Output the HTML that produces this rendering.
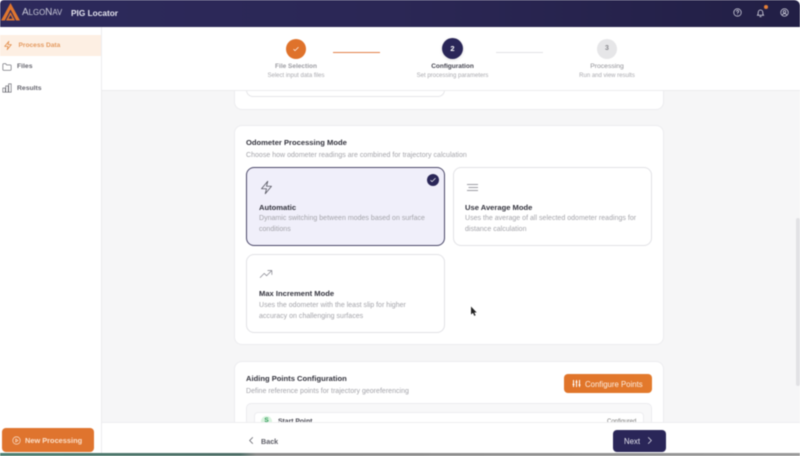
<!DOCTYPE html>
<html lang="en"><head><meta charset="utf-8"><title>PIG Locator</title>
<style>
*{box-sizing:border-box;margin:0;padding:0}
html,body{width:800px;height:456px;overflow:hidden;background:#fff;font-family:"Liberation Sans",sans-serif}
#p{position:relative;width:800px;height:456px;overflow:hidden;filter:blur(.4px)}
.a{position:absolute;white-space:nowrap}
.card{position:absolute;background:#fff;border:1px solid #ececef;border-radius:8px}
.opt{position:absolute;background:#fff;border:1px solid #e2e2e6;border-radius:8px}
.t{font-size:7.6px;font-weight:700;color:#33333d}
.d{font-size:7px;color:#a3a3a9;letter-spacing:.02px;line-height:11px;white-space:normal}
.c{text-align:center;transform:translateX(-50%)}
svg{position:absolute;fill:none}
</style></head><body><div id="p">
<div class="a" style="left:102px;top:91px;width:698px;height:365px;background:#f6f6f7"></div>

<div class="card" style="left:234px;top:80px;width:430px;height:30px;border-radius:0 0 8px 8px"></div>
<div class="a" style="left:246px;top:80px;width:199px;height:17px;background:#fff;border:1px solid #e6e6e9;border-top:0;border-radius:0 0 7px 7px"></div>

<div class="card" style="left:234px;top:125px;width:430px;height:220px"></div>
<div class="a t" style="left:246px;top:137.500px">Odometer Processing Mode</div>
<div class="a d" style="left:246px;top:149.500px;white-space:nowrap">Choose how odometer readings are combined for trajectory calculation</div>

<div class="opt" style="left:246px;top:167px;width:199px;height:79px;background:#f0effa;border:1.200px solid #4a4768"></div>
<svg style="left:259px;top:180px" width="15" height="15" viewBox="0 0 24 24" stroke="#55555f" stroke-width="1.300" stroke-linejoin="round" stroke-linecap="round"><path d="M4 14 14 2l-2 8h8L10 22l2-8z"/></svg>
<div class="a t" style="left:259px;top:202.500px">Automatic</div>
<div class="a d" style="left:259px;top:213px;width:180px">Dynamic switching between modes based on surface conditions</div>
<div class="a" style="left:427px;top:174px;width:12px;height:12px;border-radius:50%;background:#2a2658"></div>
<svg style="left:429px;top:176px" width="8" height="8" viewBox="0 0 24 24" stroke="#fff" stroke-width="2" stroke-linecap="round" stroke-linejoin="round"><path d="M5 13l4 4L19 7"/></svg>

<div class="opt" style="left:453px;top:167px;width:199px;height:79px"></div>
<svg style="left:466px;top:181px" width="13" height="13" viewBox="0 0 13 13" stroke="#7d7d86" stroke-width=".8"><path d="M1 3.500h11M2.500 6.500h9.500M1 9.500h11"/></svg>
<div class="a t" style="left:465px;top:202.500px">Use Average Mode</div>
<div class="a d" style="left:465px;top:213px;width:182px">Uses the average of all selected odometer readings for distance calculation</div>

<div class="opt" style="left:246px;top:254px;width:199px;height:79px"></div>
<svg style="left:259px;top:267px" width="14" height="14" viewBox="0 0 24 24" stroke="#85858e" stroke-width="1.200" stroke-linecap="round" stroke-linejoin="round"><path d="M2 18l7-7 4 4 9-9M15 6h7v7"/></svg>
<div class="a t" style="left:259px;top:289px">Max Increment Mode</div>
<div class="a d" style="left:259px;top:300px;width:170px">Uses the odometer with the least slip for higher accuracy on challenging surfaces</div>

<svg style="left:470px;top:306px" width="7" height="11" viewBox="0 0 7 11"><path d="M1 .5v8l2-1.600 1.300 3 1.300-.6-1.300-2.800h2.400z" fill="#222"/></svg>

<div class="card" style="left:234px;top:361px;width:430px;height:80px"></div>
<div class="a t" style="left:246px;top:373.500px">Aiding Points Configuration</div>
<div class="a d" style="left:246px;top:385.500px;white-space:nowrap">Define reference points for trajectory georeferencing</div>
<div class="a" style="left:564px;top:374px;width:88px;height:19px;border-radius:4px;background:linear-gradient(90deg,#e0742a,#e37a2c)"></div>
<svg style="left:572px;top:379px" width="9" height="9" viewBox="0 0 9 9" stroke="#fff" stroke-width="1"><path d="M1.500 1v7M4.500 1v7M7.500 1v7M.5 5.500h2M3.500 3h2M6.500 6h2"/></svg>
<div class="a" style="left:585px;top:379.500px;font-size:7.800px;color:#fdeee2">Configure Points</div>
<div class="a" style="left:246px;top:403px;width:406px;height:40px;background:#f8f8f9;border:1px solid #ececef;border-radius:5px"></div>
<div class="a" style="left:254px;top:412px;width:390px;height:30px;background:#fff;border:1px solid #ededf0;border-radius:4px"></div>
<div class="a" style="left:261px;top:416px;width:11px;height:11px;border-radius:50%;background:#d9f3df"></div>
<div class="a" style="left:261px;top:417px;width:11px;text-align:center;font-size:6.500px;font-weight:700;color:#2f9c57">S</div>
<div class="a" style="left:278px;top:417.500px;font-size:6.800px;font-weight:700;color:#44444e">Start Point</div>
<div class="a" style="left:607px;top:418.500px;font-size:6px;color:#777">Configured</div>

<div class="a" style="left:102px;top:27px;width:698px;height:64px;background:#fff;border-bottom:1px solid #ececee"></div>
<div class="a" style="left:286px;top:39px;width:20px;height:20px;border-radius:50%;background:#df722b"></div>
<svg style="left:292px;top:45px" width="8" height="8" viewBox="0 0 24 24" stroke="#fff" stroke-width="2" stroke-linecap="round" stroke-linejoin="round"><path d="M5 13l4 4L19 7"/></svg>
<div class="a" style="left:333px;top:52px;width:47px;height:1.400px;background:#e28147"></div>
<div class="a" style="left:442px;top:38px;width:21px;height:21px;border-radius:50%;background:#2a2658;box-shadow:0 1px 3px #0002"></div>
<div class="a c" style="left:452.500px;top:44px;font-size:7.500px;font-weight:700;color:#fff">2</div>
<div class="a" style="left:496px;top:52px;width:47px;height:1px;background:#e2e2e5"></div>
<div class="a" style="left:597px;top:39px;width:20px;height:20px;border-radius:50%;background:#e6e6e8"></div>
<div class="a c" style="left:607px;top:45px;font-size:7px;color:#8b8b90;font-weight:700">3</div>
<div class="a c" style="left:296px;top:63px;font-size:6.500px;color:#9b9ba1;font-weight:700">File Selection</div>
<div class="a c" style="left:296px;top:72.500px;font-size:6px;color:#a9a9ae">Select input data files</div>
<div class="a c" style="left:452.500px;top:63px;font-size:6.500px;color:#44444f;font-weight:700">Configuration</div>
<div class="a c" style="left:452.500px;top:72.500px;font-size:6px;color:#a9a9ae">Set processing parameters</div>
<div class="a c" style="left:607px;top:63px;font-size:6.800px;color:#8f8f95">Processing</div>
<div class="a c" style="left:607px;top:72.500px;font-size:6px;color:#a9a9ae">Run and view results</div>

<div class="a" style="left:0;top:27px;width:102px;height:429px;background:#fff;border-right:1px solid #ececee"></div>
<div class="a" style="left:0;top:35px;width:101px;height:21px;background:#fdefe3"></div>
<svg style="left:3px;top:40px" width="10" height="11" viewBox="0 0 24 24" stroke="#e28a45" stroke-width="1.800" stroke-linejoin="round" stroke-linecap="round"><path d="M4 14 14 2l-2 8h8L10 22l2-8z"/></svg>
<div class="a" style="left:18.500px;top:41.500px;font-size:6.600px;font-weight:700;color:#e49a60">Process Data</div>
<svg style="left:2px;top:62px" width="10" height="10" viewBox="0 0 24 24" stroke="#5f5f68" stroke-width="1.500"><path d="M2 6a2 2 0 0 1 2-2h5l2 3h9a2 2 0 0 1 2 2v9a2 2 0 0 1-2 2H4a2 2 0 0 1-2-2z"/></svg>
<div class="a" style="left:17px;top:63px;font-size:6.800px;font-weight:700;color:#66666f">Files</div>
<svg style="left:2px;top:83px" width="10" height="10" viewBox="0 0 24 24" stroke="#5f5f68" stroke-width="1.500"><path d="M2 12h6v10H2zM9 7h6v15H9zM16 2h6v20h-6z"/></svg>
<div class="a" style="left:17px;top:84.500px;font-size:6.800px;font-weight:700;color:#66666f">Results</div>

<div class="a" style="left:0;top:0;width:800px;height:27px;background:linear-gradient(90deg,#2d2a5c,#2b2755 50%,#221f45);border-radius:4px 6px 0 0"></div>
<svg style="left:1px;top:3px" width="19" height="18" viewBox="0 0 19 18"><path d="M9.500 0 19 17.500h-3.800L9.500 6.500 3.800 17.500H0z" fill="#e0762f"/><path d="M9.500 9 14 17.500H5z" fill="#e0762f"/><path d="M9.500 12 11.500 15.800H7.500z" fill="#2c2958"/></svg>
<div class="a" style="left:22px;top:7px;font-size:10px;color:#c9c9d8">A<span style="font-size:7.800px">LGO</span>N<span style="font-size:7.800px">AV</span></div>
<div class="a" style="left:71px;top:7.500px;font-size:8.300px;font-weight:700;color:#e4e4ee">PIG Locator</div>
<svg style="left:733px;top:8px" width="9" height="9" viewBox="0 0 24 24" stroke="#d7d7e3" stroke-width="2" stroke-linecap="round"><circle cx="12" cy="12" r="10"/><path d="M9 9a3 3 0 1 1 4 3c-1 .5-1 1-1 2M12 17.500v.1"/></svg>
<svg style="left:756px;top:7.500px" width="9" height="10" viewBox="0 0 24 24" stroke="#e4e4ee" stroke-width="2" stroke-linecap="round"><path d="M4 18c2-2 2-4 2-8a6 6 0 0 1 12 0c0 4 0 6 2 8zM10 21.500h4"/></svg>
<div class="a" style="left:764px;top:5px;width:4px;height:4px;border-radius:50%;background:#e47f38"></div>
<svg style="left:779.500px;top:8px" width="9" height="9" viewBox="0 0 24 24" stroke="#d7d7e3" stroke-width="2"><circle cx="12" cy="12" r="10"/><circle cx="12" cy="10" r="3.500"/><path d="M6 19c1-3 3-4 6-4s5 1 6 4"/></svg>

<div class="a" style="left:795.500px;top:218px;width:4.500px;height:168px;background:#e2e2e5;border-radius:2px"></div>

<div class="a" style="left:102px;top:422px;width:698px;height:31px;background:#fff;border-top:1px solid #eeeef0"></div>
<svg style="left:247px;top:436px" width="9" height="9" viewBox="0 0 24 24" stroke="#55555e" stroke-width="2" stroke-linecap="round" stroke-linejoin="round"><path d="M15 4l-8 8 8 8"/></svg>
<div class="a" style="left:261px;top:436.500px;font-size:7.200px;color:#5f5f68;font-weight:700">Back</div>
<div class="a" style="left:613px;top:430px;width:53px;height:22px;border-radius:4px;background:#2a2658"></div>
<div class="a" style="left:624px;top:436.500px;font-size:7.800px;color:#e5e5ef">Next</div>
<svg style="left:645px;top:436px" width="9" height="9" viewBox="0 0 24 24" stroke="#e5e5ef" stroke-width="2" stroke-linecap="round" stroke-linejoin="round"><path d="M9 4l8 8-8 8"/></svg>
<div class="a" style="left:2px;top:428px;width:91.500px;height:24px;border-radius:4px;background:#df742e"></div>
<svg style="left:12px;top:436px" width="9" height="9" viewBox="0 0 24 24" stroke="#fbe3cf" stroke-width="1.800"><circle cx="12" cy="12" r="10"/><path d="M10 8l6 4-6 4z"/></svg>
<div class="a" style="left:25px;top:436px;font-size:7.400px;font-weight:700;color:#fbdfc9">New Processing</div>
<div class="a" style="left:0;top:453px;width:800px;height:3px;background:linear-gradient(90deg,#4d8172,#4d6d66 30%,#888 32%,#9a9a9a)"></div>
</div></body></html>
